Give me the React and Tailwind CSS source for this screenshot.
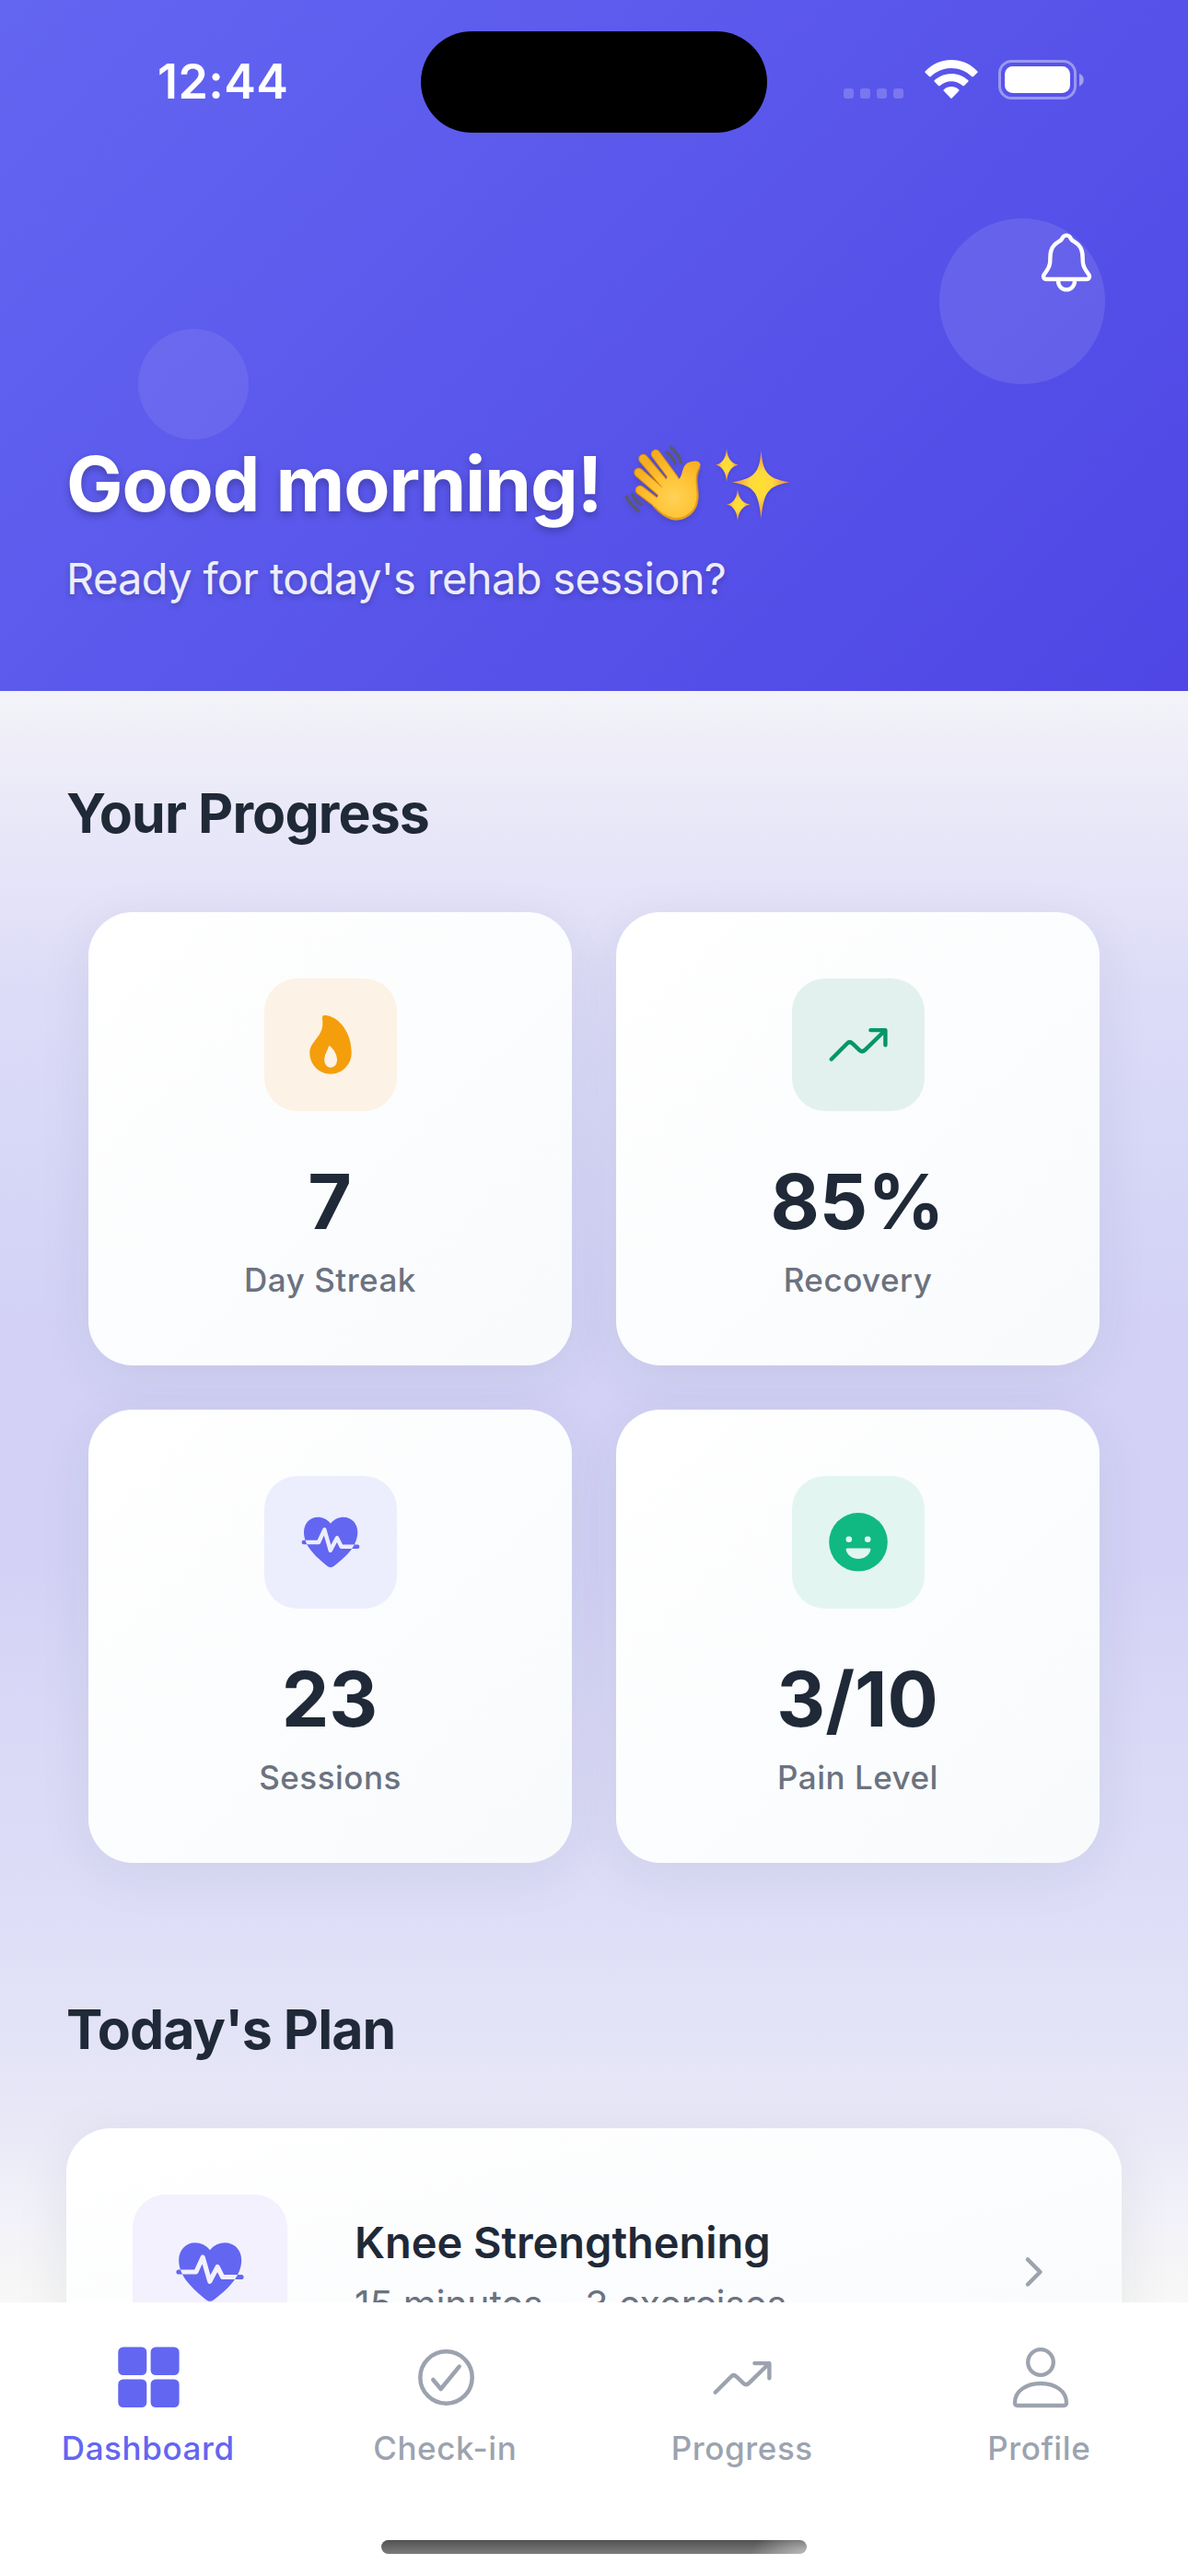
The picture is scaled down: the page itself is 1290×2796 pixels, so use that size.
import React from "react";

const heartPath =
  "M36 15.7C32.5 11 27.5 8.7 22 8.7C13.4 8.7 7 15.6 7 25C7 41 21.5 52.5 31.6 61.2C34.8 63.8 37.2 63.8 40.4 61.2C50.5 53.5 65.3 41 65.3 25C65.3 15.6 58.6 8.7 50 8.7C44.5 8.7 39.5 11 36 15.7Z";
const pulsePath = "M6.8 36H23L29.3 22.3L35.8 44.8L43 31.3L47.7 40.7H65.2";

function HeartPulse({ size, bg, id }) {
  return (
    <svg width={size} height={size} viewBox="0 0 72 72" fill="none">
      <clipPath id={id}>
        <path d={heartPath} />
      </clipPath>
      <g strokeWidth="4.4" strokeLinecap="round" strokeLinejoin="round">
        <path d={pulsePath} stroke="#6366f1" />
        <path d={heartPath} fill="#6366f1" />
        <path d={pulsePath} stroke={bg} clipPath={`url(#${id})`} />
      </g>
    </svg>
  );
}

function Flame() {
  return (
    <svg width="72" height="72" viewBox="0 0 72 72">
      <path
        fill="#f59e0b"
        fillRule="evenodd"
        d="M29.5 4.1C45 5 58.7 22.5 58.7 44.8C58.7 57.5 48.5 67.7 36 67.7C23.5 67.7 13.3 57.5 13.3 44.8C13.3 32.5 27.3 28 27.4 12.5C27.4 10 26.8 7.8 26.9 6Q27.2 3.9 29.5 4.1ZM35.2 37.4C37.6 38.6 43 45.5 43 52.3C43 57.5 40 60.7 36 60.7C32 60.7 29.3 57.3 29.3 52.3C29.3 46.5 32.6 42.5 33.6 38.6C33.9 37.4 34.4 36.9 35.2 37.4Z"
      />
    </svg>
  );
}

function Trend({ color }) {
  return (
    <svg width="72" height="72" viewBox="0 0 72 72" fill="none" stroke={color} strokeWidth="4.4" strokeLinecap="round" strokeLinejoin="round">
      <path d="M6.7 51.7L23.7 34.7Q26.7 31.7 29.7 34.7L37.3 41.8Q40.3 44.5 43.3 41.6L65.2 20.2M49.4 20.1H65.4V36.2" />
    </svg>
  );
}

function Smile() {
  return (
    <svg width="72" height="72" viewBox="0 0 72 72">
      <circle cx="36" cy="35.8" r="31.8" fill="#10b981" />
      <g fill="#e3f5f0">
        <circle cx="25.8" cy="32.7" r="3.3" />
        <circle cx="46.2" cy="32.7" r="3.3" />
        <path d="M24 42.6H48Q49.8 42.8 49.4 44.3C47.8 50.3 42.5 54 36 54C29.5 54 24.2 50.3 22.6 44.3Q22.3 42.8 24 42.6Z" />
      </g>
    </svg>
  );
}

function Bell() {
  return (
    <svg width="72" height="72" viewBox="0 0 72 72" fill="none" stroke="white" strokeWidth="4.4" strokeLinejoin="round">
      <path d="M36 6.4C33.5 6.4 32 8 30.9 10.5C29.8 12.9 26 13.6 22.8 17C17 23 19 30 18 37C17.2 42.5 14 45.5 11.9 48.7C10 51.5 11.5 54 14 54H58C60.5 54 62 51.5 60.1 48.7C58 45.5 54.8 42.5 54 37C53 30 55 23 49.2 17C46 13.6 42.2 12.9 41.1 10.5C40 8 38.5 6.4 36 6.4Z" />
      <path d="M27 55.5C27 61.5 31 65.4 36 65.4C41 65.4 45 61.5 45 55.5" />
    </svg>
  );
}

function Wave() {
  return (
    <svg className="absolute left-[678px] top-[482px] drop-shadow-md" width="86" height="86" viewBox="0 0 86 86" fill="none" role="img" aria-label="waving hand">
      <defs>
        <radialGradient id="skin" cx="54" cy="58" r="46" gradientUnits="userSpaceOnUse">
          <stop offset="0" stopColor="#ffd257" />
          <stop offset="0.55" stopColor="#ffc233" />
          <stop offset="1" stopColor="#f5ae22" />
        </radialGradient>
      </defs>
      <g stroke="#d98d0d" strokeLinecap="round" strokeWidth="10.5">
        <path d="M34 11L54 38" />
        <path d="M20.5 16L46 46" />
        <path d="M15.5 31L42 54" />
        <path d="M17 50L38 66" />
      </g>
      <g stroke="url(#skin)" strokeLinecap="round" strokeWidth="8.4">
        <path d="M34 11L54 38" />
        <path d="M20.5 16L46 46" />
        <path d="M15.5 31L42 54" />
        <path d="M17 50L38 66" />
      </g>
      <path
        d="M47 35C51 39 55 41 60 37C64 33 62 22 71 19.5C78 17 83 19 82.5 23C81 28 78.5 31 78.5 38C79 47 82 56 79 66C75 77 65 83 55 82.5C45 81.5 39 75 31 67Z"
        fill="url(#skin)"
      />
      <path d="M82 25C78 32 78 39 79 47C80.5 57 80 65 75 72C69 79 62 82 54 81C45 80 39 75 32 68" stroke="#d98d0d" strokeWidth="2.2" opacity=".7" />
      <g stroke="#5b5a62" strokeWidth="3">
        <path d="M49.5 2.5Q58.5 10 62 21" />
        <path d="M45 8Q53 14 55.5 22" />
        <path d="M1.5 56Q7 67 16.5 73" />
        <path d="M8 53.5Q12 62 19.5 66.5" />
      </g>
    </svg>
  );
}

function Sparkles() {
  return (
    <svg className="absolute left-[776px] top-[486px] drop-shadow-sm" width="82" height="80" viewBox="0 0 82 80" role="img" aria-label="sparkles">
      <defs>
        <radialGradient id="spark">
          <stop offset="0" stopColor="#ffe02e" />
          <stop offset="0.4" stopColor="#ffd83f" />
          <stop offset="1" stopColor="#ef8a3c" />
        </radialGradient>
      </defs>
      <g fill="url(#spark)">
        <path d="M50.5 3C52.5 27 57 33 81 37.5C57 41.5 53.5 49 50.5 77C47.5 49 44 41.5 19 37.5C44 33 48.5 27 50.5 3Z" />
        <path d="M13 1Q14.5 17 26 18.5Q14.5 20.5 13 37Q11.5 20.5 1 18.5Q11.5 17 13 1Z" />
        <path d="M25 45Q26.5 60 39 61.5Q26.5 63.5 25 79Q23.5 63.5 13 61.5Q23.5 60 25 45Z" />
      </g>
    </svg>
  );
}

function StatusBar() {
  return (
    <div className="relative flex h-[177px] justify-between pl-[171px] pr-[113px]">
      <span className="mt-[58px] text-[52px] font-semibold leading-[62px] tracking-[0.4px] text-white">12:44</span>
      <div className="absolute left-[457px] top-[34px] h-[110px] w-[376px] rounded-full bg-black" />
      <div className="mt-[65px] flex h-[43px] items-start">
        <div className="mr-[23px] mt-[31px] flex gap-[7px]">
          {[0, 1, 2, 3].map((i) => (
            <span key={i} className="h-[11px] w-[11px] rounded-[3px] bg-white/20" />
          ))}
        </div>
        <svg width="58" height="43" viewBox="0 0 58 43" fill="white" className="mr-[22px]">
          <path d="M0.8 12.3C15-4.1 43-4.1 57.2 12.3Q58 13.2 57.2 14L53 18Q52 18.8 51.2 18C38.5 5.9 19.5 5.9 6.8 18Q6 18.8 5 18L0.8 14Q0 13.2 0.8 12.3Z" />
          <path d="M10.8 22C21 12.5 37 12.5 47.2 22Q48 22.9 47.2 23.7L43 28Q42.2 28.7 41.3 28C34.3 21.6 23.7 21.6 16.7 28Q15.8 28.7 15 28L10.8 23.7Q10 22.9 10.8 22Z" />
          <path d="M20.8 32.2C25.5 28 32.5 28 37.2 32.2Q38 33 37.2 33.8L29.7 41.6Q29 42.3 28.3 41.6L20.8 33.8Q20 33 20.8 32.2Z" />
        </svg>
        <svg width="93" height="43" viewBox="0 0 93 43" fill="none">
          <rect x="1.5" y="1.5" width="82" height="40" rx="13" stroke="white" strokeOpacity=".4" strokeWidth="3" />
          <rect x="7" y="7" width="71" height="29" rx="8.5" fill="white" />
          <path d="M88 15C94.3 16.5 94.3 26.5 88 28.5Z" fill="white" fillOpacity=".45" />
        </svg>
      </div>
    </div>
  );
}

function Header() {
  return (
    <header className="relative h-[750px] bg-[linear-gradient(135deg,#6366f1_0%,#4f46e5_100%)]">
      <div className="absolute left-[1020px] top-[237px] h-[180px] w-[180px] rounded-full bg-white/10" />
      <div className="absolute left-[150px] top-[357px] h-[120px] w-[120px] rounded-full bg-white/8" />
      <StatusBar />
      <div className="relative mt-[72px] flex justify-end pr-[96px]">
        <Bell />
      </div>
      <div className="relative px-[72px] pt-[155px] text-white">
        <h1 className="text-[82px] font-bold leading-[100px] tracking-[-1.15px] [text-shadow:0_4px_8px_rgba(0,0,0,0.25)]">Good morning!</h1>
        <p className="mt-[24px] text-[47px] leading-[56px] tracking-[-0.66px] text-white/90 [text-shadow:0_3px_6px_rgba(0,0,0,0.22)]">Ready for today's rehab session?</p>
      </div>
      <Wave />
      <Sparkles />
    </header>
  );
}

function StatCard({ icon, box, value, label }) {
  return (
    <div className="flex h-[492px] flex-col items-center rounded-[48px] bg-linear-to-br from-white to-[#f8fafc] pt-[72px] shadow-[0_12px_60px_rgba(31,41,55,0.07)]">
      <div className={`flex h-[144px] w-[144px] items-center justify-center rounded-[36px] ${box}`}>{icon}</div>
      <div className="mt-[49px] pr-[1px] text-[82px] font-bold leading-[100px] text-[#1f2937]">{value}</div>
      <div className="mt-[12px] text-[35px] font-medium leading-[44px] tracking-[0.5px] text-[#6b7280]">{label}</div>
    </div>
  );
}

function PlanCard() {
  return (
    <div className="mx-[72px] flex h-[312px] items-center rounded-[48px] bg-linear-to-br from-white to-[#f8fafc] px-[72px] shadow-[0_12px_60px_rgba(31,41,55,0.08)]">
      <div className="flex h-[168px] w-[168px] items-center justify-center rounded-[36px] bg-[#f2f1fd]">
        <HeartPulse size={84} bg="#f2f1fd" id="plan-heart" />
      </div>
      <div className="ml-[73px] flex-1 whitespace-nowrap">
        <div className="text-[47px] font-semibold leading-[58px] tracking-[-0.05px] text-[#1f2937]">Knee Strengthening</div>
        <div className="mt-[11px] text-[41px] leading-[54px] tracking-[-0.15px] text-[#6b7280]">
          15 minutes <span className="relative top-[5px]">•</span> 3 exercises
        </div>
      </div>
      <svg width="48" height="60" viewBox="0 0 48 60" fill="none" stroke="#9ca3af" strokeWidth="4.5" strokeLinecap="round" strokeLinejoin="round">
        <path d="M18 16.5L31.5 30L18 43.5" />
      </svg>
    </div>
  );
}

function Tab({ icon, label, active }) {
  return (
    <div className={`flex flex-1 flex-col items-center pt-[46px] ${active ? "text-[#6366f1]" : "text-[#9ca3af]"}`}>
      {icon}
      <span className="mt-[18px] pr-[1px] text-[35px] font-medium leading-[44px] tracking-[0.6px]">{label}</span>
    </div>
  );
}

function TabBar() {
  return (
    <nav className="absolute bottom-0 left-0 h-[297px] w-full bg-white">
      <div className="flex h-[258px]">
        <Tab
          active
          label="Dashboard"
          icon={
            <svg width="72" height="72" viewBox="0 0 72 72" fill="currentColor">
              <rect x="3.3" y="2.5" width="31" height="30.5" rx="5.5" />
              <rect x="38.6" y="2.5" width="31" height="30.5" rx="5.5" />
              <rect x="3.3" y="37.5" width="31" height="30.5" rx="5.5" />
              <rect x="38.6" y="37.5" width="31" height="30.5" rx="5.5" />
            </svg>
          }
        />
        <Tab
          label="Check-in"
          icon={
            <svg width="72" height="72" viewBox="0 0 72 72" fill="none" stroke="currentColor" strokeWidth="4.5" strokeLinecap="round" strokeLinejoin="round">
              <circle cx="36.5" cy="35.5" r="28.2" />
              <path d="M22.3 38L30.7 48L50.7 23.6" />
            </svg>
          }
        />
        <Tab label="Progress" icon={<Trend color="currentColor" />} />
        <Tab
          label="Profile"
          icon={
            <svg width="72" height="72" viewBox="0 0 72 72" fill="none" stroke="currentColor" strokeWidth="4.3" strokeLinejoin="round">
              <circle cx="37" cy="19" r="13.8" />
              <path d="M37 42C21.5 42 9 50 9 63Q9 66 12 66H62Q65 66 65 63C65 50 52.5 42 37 42Z" />
            </svg>
          }
        />
      </div>
      <div className="mx-auto h-[15px] w-[462px] rounded-full bg-[radial-gradient(ellipse_60px_30px_at_100%_100%,rgba(255,255,255,0.5),transparent),linear-gradient(#505251,#7c7c7c)]" />
    </nav>
  );
}

export default function App() {
  return (
    <div className="relative flex h-[2796px] w-[1290px] flex-col overflow-hidden bg-white font-['Inter',sans-serif]">
      <Header />
      <main className="flex-1 overflow-hidden bg-[linear-gradient(#f3f4f8_0px,#eeedf8_60px,#e8e7f8_150px,#dddcf8_327px,#d7d7f7_495px,#d3d2f6_687px,#d3d2f6_945px,#d9d8f6_1113px,#dedef8_1338px,#e3e3f7_1450px,#e9e8f7_1560px,#f0f0f9_1630px,#f8f8f7_1750px)]">
        <h2 className="px-[72px] pt-[96px] text-[59px] font-bold leading-[74px] tracking-[-0.9px] text-[#1f2937]">Your Progress</h2>
        <section className="grid grid-cols-2 gap-[48px] px-[96px] pt-[70px]">
          <StatCard icon={<Flame />} box="bg-[#fcf2e5]" value="7" label="Day Streak" />
          <StatCard icon={<Trend color="#059669" />} box="bg-[#e2f1ee]" value="85%" label="Recovery" />
          <StatCard icon={<HeartPulse size={72} bg="#ecedfd" id="stat-heart" />} box="bg-[#ecedfd]" value="23" label="Sessions" />
          <StatCard icon={<Smile />} box="bg-[#e3f5f0]" value="3/10" label="Pain Level" />
        </section>
        <h2 className="px-[72px] pb-[70px] pt-[144px] text-[59px] font-bold leading-[74px] tracking-[-0.95px] text-[#1f2937]">Today's Plan</h2>
        <PlanCard />
      </main>
      <TabBar />
    </div>
  );
}
